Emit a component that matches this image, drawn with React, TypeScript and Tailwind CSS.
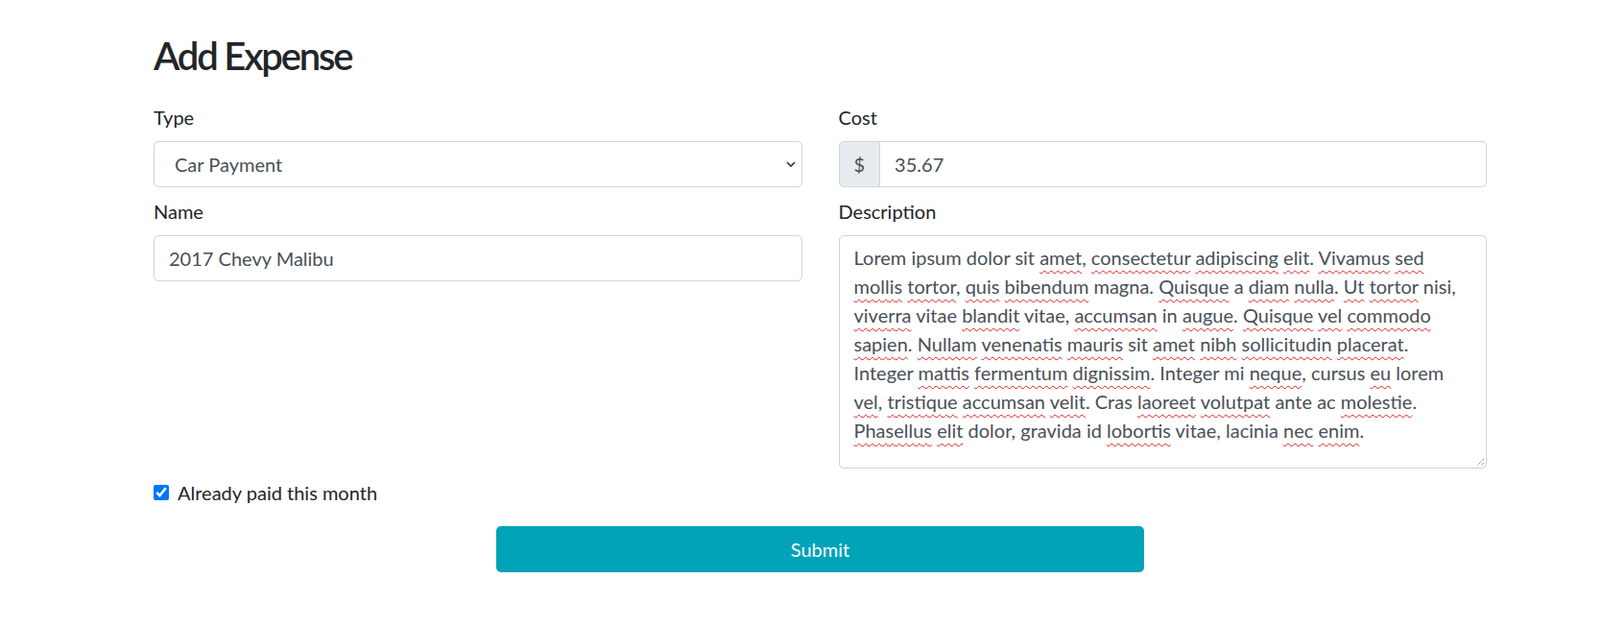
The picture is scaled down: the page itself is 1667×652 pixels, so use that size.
import { useState } from "react";

const descLines = [
    "Lorem ipsum dolor sit *amet, *consectetur *adipiscing *elit. *Vivamus *sed",
    "*mollis *tortor, *quis *bibendum magna. *Quisque a *diam *nulla. *Ut *tortor nisi,",
    "*viverra vitae *blandit vitae, *accumsan in *augue. *Quisque *vel *commodo",
    "*sapien. *Nullam *venenatis *mauris sit *amet *nibh *sollicitudin *placerat.",
    "Integer *mattis *fermentum *dignissim. Integer mi *neque, cursus *eu lorem",
    "*vel, *tristique *accumsan *velit. Cras *laoreet *volutpat ante ac *molestie.",
    "*Phasellus *elit dolor, gravida id *lobortis vitae, lacinia *nec *enim.",
];

// words marked with * get the spellcheck squiggle
const Line = ({ text }: { text: string }) => {
    const parts = text.split(" ");
    return (
        <div className="whitespace-nowrap">
            {parts.map((p, i) => {
                const sep = i < parts.length - 1 ? " " : "";
                if (!p.startsWith("*")) return <span key={i}>{p + sep}</span>;
                const m = p.slice(1).match(/^(.*?)([.,]?)$/);
                const word = m ? m[1] : p.slice(1);
                const punct = m ? m[2] : "";
                return (
                    <span key={i}>
                        <span className="underline decoration-wavy decoration-[#e02020] decoration-1 underline-offset-[5px]">
                            {word}
                        </span>
                        {punct + sep}
                    </span>
                );
            })}
        </div>
    );
};

const App = () => {
    const [type, setType] = useState("Car Payment");
    const [name, setName] = useState("2017 Chevy Malibu");
    const [cost, setCost] = useState("35.67");
    const [paid, setPaid] = useState(true);

    const inputCls =
        "w-full h-[48px] px-[15px] border border-[#ced4da] rounded-[5px] bg-white text-[20px] text-[#495057] outline-none";

    return (
        <div className="min-h-screen bg-white font-['Segoe_UI',Lato,'Open_Sans',sans-serif] text-[#212529]">
            <div className="pl-[160px] pr-[118px] pt-[34px]">
                <h2 className="text-[40px] leading-[48px] font-semibold tracking-[-2.2px] mb-[25px]">Add Expense</h2>

                <div className="grid grid-cols-2 gap-x-[38px]">
                    {/* Left column */}
                    <div>
                        <label className="block text-[20px] leading-[30px] mb-[10px]">Type</label>
                        <div className="relative mb-[10px]">
                            <select
                                value={type}
                                onChange={(e) => setType(e.target.value)}
                                className={inputCls + " appearance-none pl-[21px]"}
                            >
                                <option>Car Payment</option>
                                <option>Rent</option>
                                <option>Utilities</option>
                            </select>
                            <svg
                                className="absolute right-[6px] top-[20px] pointer-events-none"
                                width="12"
                                height="8"
                                viewBox="0 0 12 8"
                                fill="none"
                            >
                                <path d="M2 2l4 4 4-4" stroke="#333" strokeWidth="1.6" />
                            </svg>
                        </div>

                        <label className="block text-[20px] leading-[30px] mb-[10px]">Name</label>
                        <input value={name} onChange={(e) => setName(e.target.value)} className={inputCls} />
                    </div>

                    {/* Right column */}
                    <div>
                        <label className="block text-[20px] leading-[30px] mb-[10px]">Cost</label>
                        <div className="flex mb-[10px] h-[48px]">
                            <span className="flex items-center px-[15px] text-[20px] text-[#495057] bg-[#e9ecef] border border-[#ced4da] rounded-l-[5px]">
                                $
                            </span>
                            <input
                                value={cost}
                                onChange={(e) => setCost(e.target.value)}
                                className="flex-1 min-w-0 h-full px-[15px] border border-l-0 border-[#ced4da] rounded-r-[5px] text-[20px] text-[#495057] outline-none"
                            />
                        </div>

                        <label className="block text-[20px] leading-[30px] mb-[10px]">Description</label>
                        <div
                            role="textbox"
                            className="relative h-[243px] px-[15px] py-[7px] border border-[#ced4da] rounded-[5px] text-[20px] leading-[30px] text-[#495057] overflow-hidden"
                        >
                            {descLines.map((l, i) => (
                                <Line key={i} text={l} />
                            ))}
                            {/* resize grip */}
                            <svg className="absolute right-[1px] bottom-[1px]" width="9" height="9" viewBox="0 0 9 9">
                                <path d="M8 1L1 8M8 5L5 8" stroke="#6b6b6b" strokeWidth="1" strokeDasharray="1 1" />
                            </svg>
                        </div>
                    </div>
                </div>

                <label className="flex items-center gap-[9px] mt-[10px] h-[30px] text-[20px]">
                    <input
                        type="checkbox"
                        checked={paid}
                        onChange={(e) => setPaid(e.target.checked)}
                        className="w-[16px] h-[16px] accent-[#0075ff]"
                    />
                    Already paid this month
                </label>

                <div className="flex justify-center mt-[20px]">
                    <button className="w-[675px] h-[48px] rounded-[5px] bg-[#00a3b7] text-white text-[20px]">
                        Submit
                    </button>
                </div>
            </div>
        </div>
    );
};

export default App;
